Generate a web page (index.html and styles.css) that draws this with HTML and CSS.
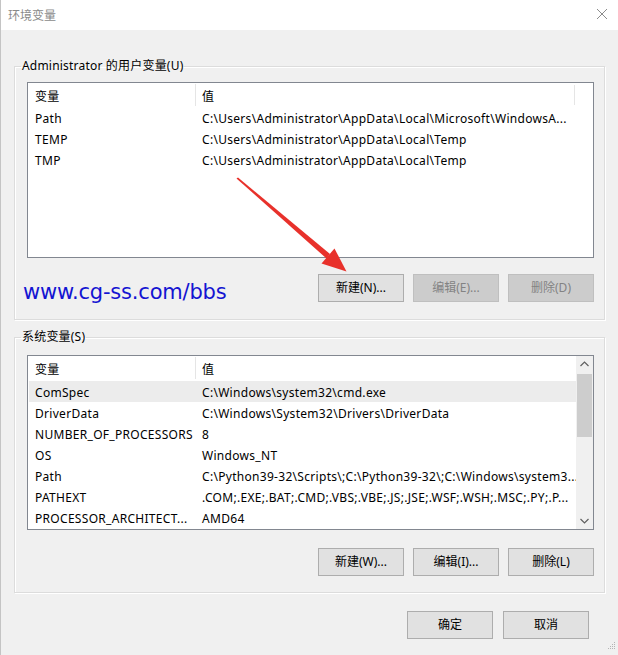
FILE: index.html
```html
<!DOCTYPE html>
<html>
<head>
<meta charset="utf-8">
<link rel="stylesheet" href="styles.css">
</head>
<body>
<div class="window">
  <div class="titlebar">
    <span class="title">环境变量</span>
    <svg class="close" width="12" height="12" viewBox="0 0 12 12"><path d="M1 1 L11 11 M11 1 L1 11" stroke="#8c8c8c" stroke-width="1" fill="none"/></svg>
  </div>
  <div class="client">
    <fieldset class="group group-user">
      <legend>Administrator 的用户变量(U)</legend>
      <div class="list list-user">
        <div class="row head"><div class="c1">变量</div><div class="c2">值</div><div class="c3"></div></div>
        <div class="row"><div class="c1">Path</div><div class="c2">C:\Users\Administrator\AppData\Local\Microsoft\WindowsA...</div></div>
        <div class="row"><div class="c1">TEMP</div><div class="c2">C:\Users\Administrator\AppData\Local\Temp</div></div>
        <div class="row"><div class="c1">TMP</div><div class="c2">C:\Users\Administrator\AppData\Local\Temp</div></div>
      </div>
      <div class="btnrow">
        <span class="watermark">www.cg-ss.com/bbs</span>
        <div class="btns">
          <button class="btn">新建(N)...</button>
          <button class="btn disabled">编辑(E)...</button>
          <button class="btn disabled">删除(D)</button>
        </div>
      </div>
    </fieldset>
    <fieldset class="group group-sys">
      <legend>系统变量(S)</legend>
      <div class="list list-sys">
        <div class="rows">
          <div class="row head"><div class="c1">变量</div><div class="c2">值</div></div>
          <div class="row sel"><div class="c1">ComSpec</div><div class="c2">C:\Windows\system32\cmd.exe</div></div>
          <div class="row"><div class="c1">DriverData</div><div class="c2">C:\Windows\System32\Drivers\DriverData</div></div>
          <div class="row"><div class="c1">NUMBER_OF_PROCESSORS</div><div class="c2">8</div></div>
          <div class="row"><div class="c1">OS</div><div class="c2">Windows_NT</div></div>
          <div class="row"><div class="c1">Path</div><div class="c2">C:\Python39-32\Scripts\;C:\Python39-32\;C:\Windows\system3...</div></div>
          <div class="row"><div class="c1">PATHEXT</div><div class="c2">.COM;.EXE;.BAT;.CMD;.VBS;.VBE;.JS;.JSE;.WSF;.WSH;.MSC;.PY;.P...</div></div>
          <div class="row"><div class="c1">PROCESSOR_ARCHITECT...</div><div class="c2">AMD64</div></div>
        </div>
        <div class="scrollbar">
          <svg class="sarrow" width="17" height="17" viewBox="0 0 17 17"><path d="M4.5 10 L8.5 6 L12.5 10" stroke="#606060" stroke-width="1.2" fill="none"/></svg>
          <div class="track"><div class="thumb"></div></div>
          <svg class="sarrow" width="17" height="17" viewBox="0 0 17 17"><path d="M4.5 7 L8.5 11 L12.5 7" stroke="#606060" stroke-width="1.2" fill="none"/></svg>
        </div>
      </div>
      <div class="btnrow end">
        <div class="btns">
          <button class="btn">新建(W)...</button>
          <button class="btn">编辑(I)...</button>
          <button class="btn">删除(L)</button>
        </div>
      </div>
    </fieldset>
    <div class="footer">
      <button class="btn">确定</button>
      <button class="btn">取消</button>
    </div>
  </div>
</div>
<svg class="arrow" width="618" height="655" viewBox="0 0 618 655">
  <polygon points="236.5,178.5 238,177.5 330,254 326.5,258.5" fill="#e8312b"/>
  <polygon points="346.5,271.5 321.5,263.5 334.5,248.5" fill="#e8312b"/>
</svg>
<svg class="grip" width="10" height="10" viewBox="0 0 10 10">
  <g fill="#b4b4b4"><rect x="8" y="0" width="1" height="1"/><rect x="6" y="2" width="1" height="1"/><rect x="8" y="2" width="1" height="1"/><rect x="4" y="4" width="1" height="1"/><rect x="6" y="4" width="1" height="1"/><rect x="8" y="4" width="1" height="1"/><rect x="2" y="6" width="1" height="1"/><rect x="4" y="6" width="1" height="1"/><rect x="6" y="6" width="1" height="1"/><rect x="8" y="6" width="1" height="1"/></g>
</svg>
</body>
</html>
```

FILE: styles.css
```css
* { box-sizing: border-box; }
html, body { margin: 0; padding: 0; }
body {
  width: 618px;
  height: 655px;
  overflow: hidden;
  background: #f0f0f0;
  font-family: "Noto Sans", "Noto Sans CJK SC", sans-serif;
  font-size: 12px;
  color: #000;
  position: relative;
}
.window {
  height: 655px;
  border-left: 1px solid #c4c4c4;
  background: #f0f0f0;
}
.titlebar {
  height: 30px;
  background: #fff;
  display: flex;
  align-items: center;
  justify-content: space-between;
  padding: 0 10px 2px 7px;
}
.title {
  color: #8a8a8a;
  font-family: "Noto Sans CJK SC", sans-serif;
  font-size: 12px;
}
.client {
  padding: 28px 13px 0 13px;
}
.group {
  margin: 0;
  border: 1px solid #dcdcdc;
  box-shadow: inset 1px 1px 0 #fff, 1px 1px 0 #fff;
  padding: 8px 10px 17px 12px;
  min-width: 0;
}
.group legend {
  font-family: "Noto Sans", "Noto Sans CJK SC", sans-serif;
  line-height: 16px;
  height: 16px;
  padding: 0 1px;
  margin-left: -6px;
  color: #000;
  letter-spacing: 0.2px;
}
.group-sys {
  margin-top: 9px;
  padding: 10px 10px 16px 12px;
}
.list {
  background: #fff;
  border: 1px solid #828790;
  line-height: 21px;
  white-space: nowrap;
  overflow: hidden;
  letter-spacing: 0.3px;
}
.list-user { height: 176px; }
.list-sys {
  height: 175px;
  display: flex;
}
.rows { flex: 1; min-width: 0; }
.row {
  display: flex;
  height: 21px;
  align-items: center;
  padding-top: 2px;
}
.row.head {
  height: 24px;
  padding-top: 0;
}
.list-sys .row.head { height: 25px; }
.row.head .c1 {
  border-right: 1px solid #e5e5e5;
  height: 22px;
  align-self: flex-start;
  line-height: 23px;
  margin-top: 1px;
}
.row.head .c2 { line-height: 23px; align-self: flex-start; margin-top: 1px; }
.row.head .c3 {
  width: 1px; height: 20px; background: #e5e5e5; margin-left: auto; margin-right: 18px; align-self: flex-start; margin-top: 2px;
}
.c1 {
  width: 168px;
  padding-left: 7px;
  overflow: hidden;
  flex: 0 0 168px;
}
.c2 {
  padding-left: 6px;
}
.head .c1, .head .c2 { font-family: "Noto Sans CJK SC", sans-serif; }
.row.sel {
  background: #ececec;
  margin-left: 1px;
}
.row.sel .c1 { padding-left: 6px; width: 167px; flex-basis: 167px; }
.scrollbar {
  width: 17px;
  background: #f0f0f0;
  display: flex;
  flex-direction: column;
}
.sarrow { display: block; flex: 0 0 17px; }
.track { flex: 1; padding: 1px 1px; }
.thumb {
  height: 63px;
  background: #cdcdcd;
}
.btnrow {
  display: flex;
  justify-content: space-between;
  align-items: flex-start;
  margin-top: 16px;
  height: 28px;
}
.group-sys .btnrow { margin-top: 18px; }
.btnrow.end { justify-content: flex-end; }
.watermark {
  font-family: "DejaVu Sans", sans-serif;
  font-size: 21px;
  line-height: 28px;
  color: #1414d2;
  margin-left: -4px;
  margin-top: 4px;
  letter-spacing: -0.2px;
}
.btns {
  display: flex;
  gap: 9px;
}
.btn {
  width: 86px;
  height: 28px;
  background: #e1e1e1;
  border: 1px solid #adadad;
  font-family: "Noto Sans", "Noto Sans CJK SC", sans-serif;
  font-size: 12px;
  color: #000;
  padding: 0;
  margin: 0;
  line-height: 26px;
}
.btn.disabled {
  background: #cccccc;
  border-color: #bfbfbf;
  color: #838383;
}
.footer {
  display: flex;
  justify-content: flex-end;
  gap: 10px;
  margin-top: 18px;
  padding-right: 16px;
}
.arrow {
  position: absolute;
  left: 0;
  top: 0;
  pointer-events: none;
}
.grip {
  position: absolute;
  right: 2px;
  bottom: 3px;
}
```
